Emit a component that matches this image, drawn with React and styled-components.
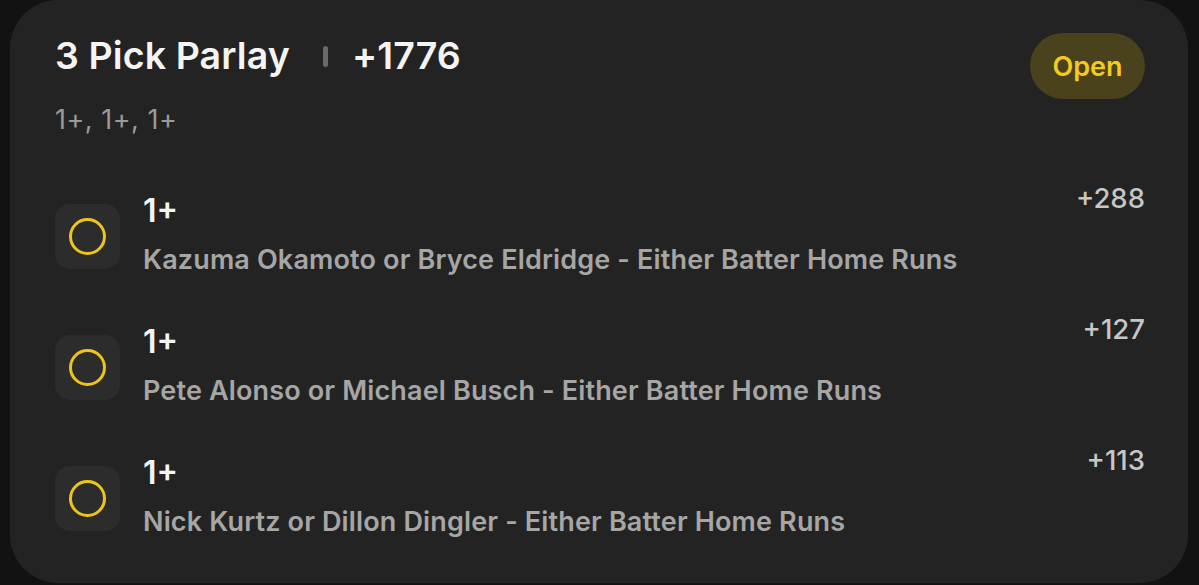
import React from "react"
import styled, { createGlobalStyle } from "styled-components"

const GlobalStyle = createGlobalStyle`
  html, body {
    margin: 0;
    padding: 0;
    background: #121212;
    font-family: Inter, "Noto Sans", sans-serif;
  }
`

const legs = [
  { line: "1+", desc: "Kazuma Okamoto or Bryce Eldridge - Either Batter Home Runs", odds: "+288" },
  { line: "1+", desc: "Pete Alonso or Michael Busch - Either Batter Home Runs", odds: "+127" },
  { line: "1+", desc: "Nick Kurtz or Dillon Dingler - Either Batter Home Runs", odds: "+113" },
]

const Page = styled.div`
  width: 1199px;
  height: 585px;
  padding: 0 11px 2px 10px;
  box-sizing: border-box;
  overflow: hidden;
`

const Card = styled.div`
  height: 100%;
  background: #232323;
  border-radius: 48px;
  padding: 33px 43px 0 45px;
  box-sizing: border-box;
`

const Header = styled.div`
  display: flex;
  justify-content: space-between;
  align-items: flex-start;
`

const TitleRow = styled.div`
  display: flex;
  align-items: center;
  color: #f4f4f4;
  font-size: 37.5px;
  font-weight: 600;
  line-height: 46px;
  letter-spacing: 0.1px;
`

const Divider = styled.span`
  display: inline-block;
  width: 5px;
  height: 21px;
  border-radius: 3px;
  background: #6a6a6a;
  margin: 0 24px 0 33px;
`

const Summary = styled.div`
  color: #9a9a9a;
  font-size: 27px;
  line-height: 32px;
  letter-spacing: 0.5px;
  margin-top: 25px;
`

const Status = styled.div`
  height: 66px;
  width: 115px;
  border-radius: 33px;
  background: #4a411d;
  color: #f3cb1f;
  font-size: 27px;
  font-weight: 600;
  display: flex;
  align-items: center;
  justify-content: center;
`

const Legs = styled.div`
  display: flex;
  flex-direction: column;
  margin-top: 46px;
`

const Leg = styled.div`
  display: grid;
  grid-template-columns: 65px 1fr auto;
  column-gap: 23px;
  height: 131px;
`

const IconBox = styled.div`
  width: 65px;
  height: 65px;
  border-radius: 15px;
  background: #2c2c2c;
  margin-top: 22px;
  display: flex;
  align-items: center;
  justify-content: center;
`

const Ring = styled.span`
  width: 31px;
  height: 31px;
  border-radius: 50%;
  border: 3px solid #edc41c;
`

const LegText = styled.div`
  display: flex;
  flex-direction: column;
  padding-top: 10px;
`

const LegLine = styled.div`
  color: #f4f4f4;
  font-size: 32px;
  font-weight: 600;
  line-height: 38px;
`

const LegDesc = styled.div`
  color: #a6a6a6;
  font-size: 27px;
  font-weight: 600;
  line-height: 32px;
  letter-spacing: 0.15px;
  margin-top: 14px;
`

const Odds = styled.div`
  color: #c6c6c6;
  font-size: 27.5px;
  font-weight: 500;
  line-height: 32px;
`

export default function App() {
  return (
    <Page>
      <GlobalStyle />
      <Card>
        <Header>
          <div>
            <TitleRow>
              <span>3 Pick Parlay</span>
              <Divider />
              <span>+1776</span>
            </TitleRow>
            <Summary>1+, 1+, 1+</Summary>
          </div>
          <Status>Open</Status>
        </Header>
        <Legs>
          {legs.map((leg, i) => (
            <Leg key={i}>
              <IconBox>
                <Ring />
              </IconBox>
              <LegText>
                <LegLine>{leg.line}</LegLine>
                <LegDesc>{leg.desc}</LegDesc>
              </LegText>
              <Odds>{leg.odds}</Odds>
            </Leg>
          ))}
        </Legs>
      </Card>
    </Page>
  )
}
